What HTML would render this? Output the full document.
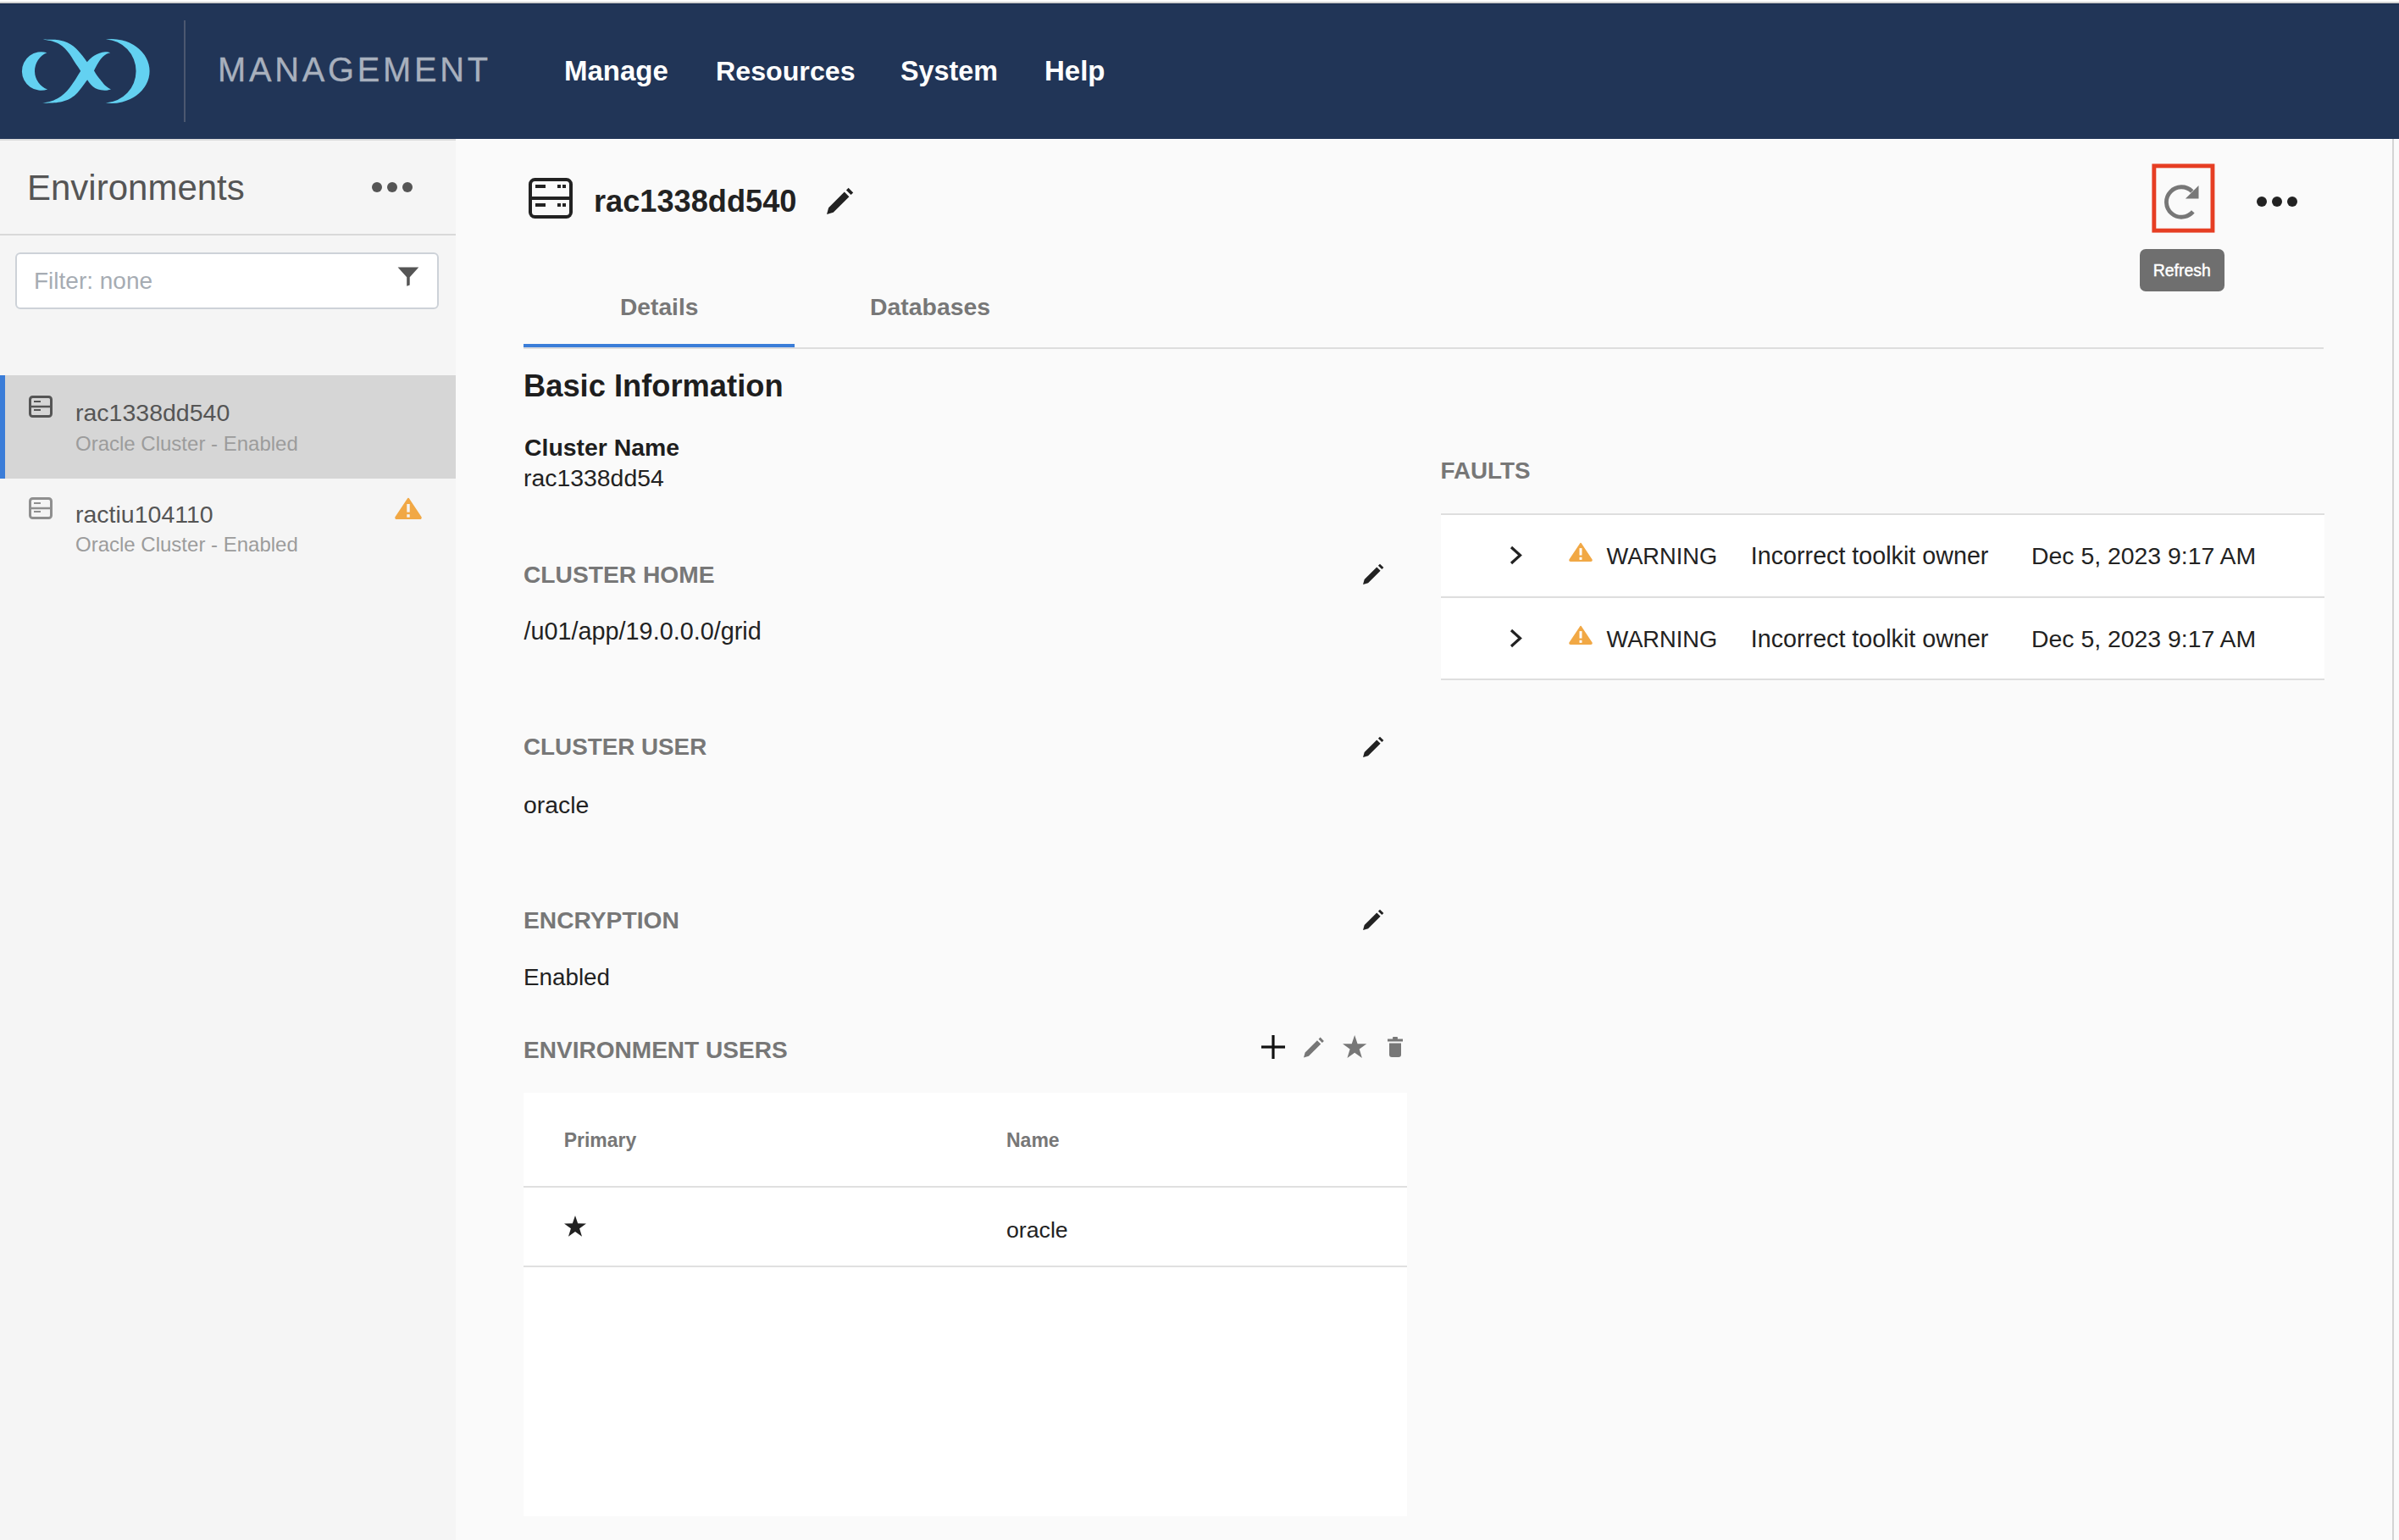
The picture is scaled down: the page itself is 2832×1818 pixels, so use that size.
<!DOCTYPE html>
<html><head><meta charset="utf-8"><style>
html,body{margin:0;padding:0;width:2832px;height:1818px;overflow:hidden;background:#fafafa;font-family:"Liberation Sans",sans-serif;}
.t{position:absolute;white-space:nowrap;line-height:1;}
.a{position:absolute;}
svg{position:absolute;overflow:visible;}
</style></head><body>
<div class="a" style="left:0;top:0;width:2832px;height:2px;background:#fff"></div><div class="a" style="left:0;top:2px;width:2832px;height:2px;background:#d2d2d2"></div><div class="a" style="left:0;top:4px;width:2832px;height:160px;background:#213557;border-top:1px solid #16284a;box-sizing:border-box"></div><svg style="left:0;top:0" width="200" height="164"><g fill="#63d1f1"><path d="M55.4 62.3 A22.74 22.74 0 1 0 56.1 105.5 A23.2 23.2 0 0 1 55.4 62.3 Z"/><path d="M124.9 46.4 A45.15 37.95 0 1 1 124.9 121.5 A37.6 37.6 0 0 0 124.9 46.4 Z"/><path d="M49.09 46.36 C50.23 46.41 52.95 46.55 55.91 46.64 C58.86 46.73 63.55 46.55 66.82 46.91 C70.09 47.27 72.82 47.91 75.55 48.82 C78.27 49.73 80.82 50.95 83.18 52.36 C85.55 53.77 87.73 55.45 89.73 57.27 C91.73 59.09 93.55 61.36 95.18 63.27 C96.82 65.18 98.27 67.05 99.55 68.73 C100.82 70.41 102.27 72.59 102.82 73.36 C103.46 72.68 105.18 70.59 106.64 69.27 C108.09 67.96 109.73 66.55 111.55 65.45 C113.36 64.36 115.46 63.41 117.55 62.73 C119.64 62.05 121.96 61.45 124.09 61.36 C126.23 61.27 129.32 62.05 130.37 62.18 C129.59 62.45 127.23 63.00 125.73 63.82 C124.23 64.64 122.82 65.64 121.37 67.09 C119.91 68.55 118.27 70.73 117.00 72.55 C115.73 74.36 114.73 76.18 113.73 78.00 C112.73 79.82 111.46 82.55 111.00 83.46 C111.64 84.46 113.55 87.64 114.82 89.46 C116.09 91.27 117.27 92.64 118.64 94.36 C120.00 96.09 121.64 98.36 123.00 99.82 C124.37 101.27 125.50 102.14 126.82 103.09 C128.14 104.05 130.23 105.14 130.91 105.55 C130.05 105.73 127.68 106.50 125.73 106.64 C123.77 106.77 121.37 106.77 119.18 106.36 C117.00 105.96 114.64 105.27 112.64 104.18 C110.64 103.09 108.77 101.46 107.18 99.82 C105.59 98.18 103.77 95.27 103.09 94.36 C102.41 95.27 100.50 97.82 99.00 99.82 C97.50 101.82 95.82 104.27 94.09 106.36 C92.36 108.46 90.64 110.64 88.64 112.36 C86.64 114.09 84.64 115.46 82.09 116.73 C79.55 118.00 76.36 119.23 73.36 120.00 C70.36 120.77 67.00 121.09 64.09 121.37 C61.18 121.64 58.23 121.59 55.91 121.64 C53.59 121.68 51.14 121.64 50.18 121.64 C51.59 121.37 55.68 120.91 58.64 120.00 C61.59 119.09 65.09 117.73 67.91 116.18 C70.73 114.64 73.18 112.82 75.55 110.73 C77.91 108.64 80.09 106.09 82.09 103.64 C84.09 101.18 86.00 98.27 87.55 96.00 C89.09 93.73 90.09 92.05 91.36 90.00 C92.64 87.96 94.55 84.77 95.18 83.73 C94.55 82.77 92.73 80.05 91.36 78.00 C90.00 75.96 88.55 73.82 87.00 71.46 C85.46 69.09 83.82 66.18 82.09 63.82 C80.36 61.45 78.73 59.27 76.64 57.27 C74.55 55.27 72.09 53.27 69.55 51.82 C67.00 50.36 64.09 49.36 61.36 48.55 C58.64 47.73 55.23 47.27 53.18 46.91 C51.14 46.55 49.77 46.45 49.09 46.36 Z"/></g></svg>
<div class="a" style="left:217px;top:24px;width:2px;height:120px;background:#4c5870"></div><div class="t" style="left:257px;top:62.90px;font-size:39.8px;font-weight:400;color:#a8b0bd;letter-spacing:3.75px;-webkit-text-stroke:0.35px #a8b0bd">MANAGEMENT</div>
<div class="t" style="left:666px;top:67.26px;font-size:33px;font-weight:700;color:#fff;">Manage</div>
<div class="t" style="left:845px;top:67.94px;font-size:32.2px;font-weight:700;color:#fff;">Resources</div>
<div class="t" style="left:1063px;top:67.85px;font-size:32.3px;font-weight:700;color:#fff;">System</div>
<div class="t" style="left:1233px;top:67.26px;font-size:33px;font-weight:700;color:#fff;">Help</div>
<div class="a" style="left:0;top:164px;width:538px;height:1654px;background:#f5f5f5"></div><div class="a" style="left:0;top:164px;width:538px;height:2px;background:#dcdcdc"></div><div class="a" style="left:538px;top:164px;width:2294px;height:1px;background:#fff"></div><div class="t" style="left:32px;top:200.94px;font-size:42px;font-weight:400;color:#555;">Environments</div>
<div class="a" style="left:439.0px;top:214.6px;width:12.4px;height:12.4px;border-radius:50%;background:#555"></div><div class="a" style="left:457.0px;top:214.6px;width:12.4px;height:12.4px;border-radius:50%;background:#555"></div><div class="a" style="left:475.0px;top:214.6px;width:12.4px;height:12.4px;border-radius:50%;background:#555"></div><div class="a" style="left:0;top:276px;width:538px;height:2px;background:#d9d9d9"></div><div class="a" style="left:18px;top:298px;width:500px;height:67px;box-sizing:border-box;border:2px solid #cdd2d8;border-radius:6px;background:#fff"></div><div class="t" style="left:40px;top:318.29px;font-size:28px;font-weight:400;color:#a6acb3;">Filter: none</div>
<svg style="left:469px;top:315px" width="26" height="23"><path d="M0.6 0.6H25.3L14.7 12.3V21.5L11.2 22.8V12.3Z" fill="#555"/></svg><div class="a" style="left:0;top:443px;width:538px;height:122px;background:#d6d6d6"></div><div class="a" style="left:0;top:443px;width:6px;height:122px;background:#3b7dd8"></div><svg style="left:34px;top:467px" width="28" height="26"><rect x="1.5" y="1.5" width="25" height="23" rx="3" fill="none" stroke="#555" stroke-width="3"/><line x1="2" y1="13" x2="26" y2="13" stroke="#555" stroke-width="2.5"/><rect x="6" y="6" width="8" height="2" fill="#555"/><rect x="6" y="16" width="8" height="2" fill="#555"/></svg><div class="t" style="left:89px;top:473.07px;font-size:28.5px;font-weight:400;color:#555;">rac1338dd540</div>
<div class="t" style="left:89px;top:511.68px;font-size:24px;font-weight:400;color:#9c9c9c;">Oracle Cluster - Enabled</div>
<svg style="left:34px;top:587px" width="28" height="26"><rect x="1.5" y="1.5" width="25" height="23" rx="3" fill="none" stroke="#8f8f8f" stroke-width="3"/><line x1="2" y1="13" x2="26" y2="13" stroke="#8f8f8f" stroke-width="2.5"/><rect x="6" y="6" width="8" height="2" fill="#8f8f8f"/><rect x="6" y="16" width="8" height="2" fill="#8f8f8f"/></svg><div class="t" style="left:89px;top:593.27px;font-size:28.5px;font-weight:400;color:#555;">ractiu104110</div>
<div class="t" style="left:89px;top:631.48px;font-size:24px;font-weight:400;color:#9c9c9c;">Oracle Cluster - Enabled</div>
<svg style="left:466px;top:587px" width="32" height="26" viewBox="0 0 32 26"><path d="M16 2.2 L30.3 23.6 Q30.8 24.8 29.6 24.8 H2.4 Q1.2 24.8 1.7 23.6 Z" fill="#f1a845" stroke="#f1a845" stroke-width="2.6" stroke-linejoin="round"/><rect x="14.3" y="8" width="3.4" height="9.6" fill="#f5f5f5"/><rect x="14.3" y="20.2" width="3.4" height="3.5" fill="#f5f5f5"/></svg><div class="a" style="left:2824px;top:164px;width:2px;height:1654px;background:#d4d4d4"></div><svg style="left:624px;top:210px" width="52" height="48"><rect x="2" y="2" width="48" height="44" rx="5.5" fill="none" stroke="#222" stroke-width="4"/><line x1="2" y1="24" x2="50" y2="24" stroke="#222" stroke-width="4"/><rect x="8" y="8" width="12" height="4" fill="#222"/><rect x="34" y="8" width="4" height="4" fill="#222"/><rect x="40" y="8" width="4" height="4" fill="#222"/><rect x="8" y="30" width="12" height="4" fill="#222"/><rect x="34" y="30" width="4" height="4" fill="#222"/><rect x="40" y="30" width="4" height="4" fill="#222"/></svg><div class="t" style="left:701px;top:220.35px;font-size:36.2px;font-weight:700;color:#222;">rac1338dd540</div>
<svg style="left:976px;top:221px" width="32" height="32" viewBox="0 0 24 24"><path d="M0 24 L1.6 18.2 L15.6 4.2 L19.8 8.4 L5.8 22.4 Z M17.2 2.6 L19.2 0.6 L23.4 4.8 L21.4 6.8 Z" fill="#222"/></svg><svg style="left:2540px;top:193px" width="76" height="83"><rect x="2.85" y="2.85" width="69.1" height="76.3" fill="none" stroke="#e63e23" stroke-width="4.9"/></svg><svg style="left:2555.4px;top:218.1px" width="42" height="41" viewBox="0 0 42 41"><path d="M33.8 31.9 A17.75 17.75 0 1 1 32.75 7.95" fill="none" stroke="#777" stroke-width="4.8"/><path d="M40.5 1.0 V16.6 H24.9 Z" fill="#777"/></svg><div class="a" style="left:2664.0px;top:231.8px;width:12.2px;height:12.2px;border-radius:50%;background:#222"></div><div class="a" style="left:2682.0px;top:231.8px;width:12.2px;height:12.2px;border-radius:50%;background:#222"></div><div class="a" style="left:2700.0px;top:231.8px;width:12.2px;height:12.2px;border-radius:50%;background:#222"></div><div class="a" style="left:2526px;top:294px;width:100px;height:50px;border-radius:7px;background:#6f6f6f"></div><div class="t" style="left:2541.8px;top:309.57px;font-size:19.4px;font-weight:400;color:#fff;-webkit-text-stroke:0.45px #fff">Refresh</div>
<div class="a" style="left:618px;top:410px;width:2125px;height:2px;background:#dddddd"></div><div class="a" style="left:618px;top:406px;width:320px;height:4px;background:#3b7dd8"></div><div class="t" style="left:732px;top:348.12px;font-size:28.2px;font-weight:700;color:#777;">Details</div>
<div class="t" style="left:1027px;top:347.95px;font-size:28.4px;font-weight:700;color:#777;">Databases</div>
<div class="t" style="left:618px;top:438.06px;font-size:36.3px;font-weight:700;color:#1e1e1e;">Basic Information</div>
<div class="t" style="left:619px;top:514.15px;font-size:28.4px;font-weight:700;color:#1e1e1e;">Cluster Name</div>
<div class="t" style="left:618px;top:549.55px;font-size:28.4px;font-weight:400;color:#222;">rac1338dd54</div>
<div class="t" style="left:618px;top:663.92px;font-size:28.2px;font-weight:700;color:#777;">CLUSTER HOME</div>
<div class="t" style="left:618.5px;top:731.42px;font-size:28.8px;font-weight:400;color:#222;">/u01/app/19.0.0.0/grid</div>
<svg style="left:1609px;top:665px" width="25" height="25" viewBox="0 0 24 24"><path d="M0 24 L1.6 18.2 L15.6 4.2 L19.8 8.4 L5.8 22.4 Z M17.2 2.6 L19.2 0.6 L23.4 4.8 L21.4 6.8 Z" fill="#222"/></svg><div class="t" style="left:618px;top:868.46px;font-size:27.8px;font-weight:700;color:#777;">CLUSTER USER</div>
<div class="t" style="left:618px;top:935.95px;font-size:28.4px;font-weight:400;color:#222;">oracle</div>
<svg style="left:1609px;top:869px" width="25" height="25" viewBox="0 0 24 24"><path d="M0 24 L1.6 18.2 L15.6 4.2 L19.8 8.4 L5.8 22.4 Z M17.2 2.6 L19.2 0.6 L23.4 4.8 L21.4 6.8 Z" fill="#222"/></svg><div class="t" style="left:618px;top:1072.02px;font-size:28.2px;font-weight:700;color:#777;">ENCRYPTION</div>
<div class="t" style="left:618px;top:1140.36px;font-size:27.8px;font-weight:400;color:#222;">Enabled</div>
<svg style="left:1609px;top:1073px" width="25" height="25" viewBox="0 0 24 24"><path d="M0 24 L1.6 18.2 L15.6 4.2 L19.8 8.4 L5.8 22.4 Z M17.2 2.6 L19.2 0.6 L23.4 4.8 L21.4 6.8 Z" fill="#222"/></svg><div class="t" style="left:618px;top:1226.15px;font-size:28.05px;font-weight:700;color:#777;">ENVIRONMENT USERS</div>
<svg style="left:1489px;top:1222px" width="28" height="28"><rect x="12.4" y="0" width="3.2" height="28" fill="#111"/><rect x="0" y="12.4" width="28" height="3.2" fill="#111"/></svg><svg style="left:1539px;top:1224px" width="24.5" height="24.5" viewBox="0 0 24 24"><path d="M0 24 L1.6 18.2 L15.6 4.2 L19.8 8.4 L5.8 22.4 Z M17.2 2.6 L19.2 0.6 L23.4 4.8 L21.4 6.8 Z" fill="#777"/></svg><svg style="left:1585px;top:1221.8px" width="28.3" height="28.3" viewBox="0 0 24 24"><path d="M12 0 L14.9 8.6 L24 8.7 L16.7 14.1 L19.4 22.8 L12 17.5 L4.6 22.8 L7.3 14.1 L0 8.7 L9.1 8.6 Z" fill="#777"/></svg><svg style="left:1638px;top:1223.5px" width="18" height="24" viewBox="0 0 18 24"><rect x="0" y="2.5" width="18" height="3" fill="#777"/><rect x="6" y="0" width="6" height="3" rx="1" fill="#777"/><path d="M2 7.5 H16 V21 Q16 24 13 24 H5 Q2 24 2 21 Z" fill="#777"/></svg><div class="a" style="left:618px;top:1290px;width:1043px;height:500px;background:#fff"></div><div class="a" style="left:618px;top:1400px;width:1043px;height:2px;background:#e0e0e0"></div><div class="a" style="left:618px;top:1494px;width:1043px;height:2px;background:#e0e0e0"></div><div class="t" style="left:665.7px;top:1334.73px;font-size:23px;font-weight:700;color:#777;">Primary</div>
<div class="t" style="left:1188px;top:1334.73px;font-size:23px;font-weight:700;color:#777;">Name</div>
<svg style="left:666px;top:1435px" width="26" height="26" viewBox="0 0 24 24"><path d="M12 0 L14.9 8.6 L24 8.7 L16.7 14.1 L19.4 22.8 L12 17.5 L4.6 22.8 L7.3 14.1 L0 8.7 L9.1 8.6 Z" fill="#222"/></svg><div class="t" style="left:1188px;top:1438.99px;font-size:26.7px;font-weight:400;color:#222;">oracle</div>
<div class="t" style="left:1700.5px;top:542.46px;font-size:27.8px;font-weight:700;color:#777;">FAULTS</div>
<div class="a" style="left:1701px;top:606.0px;width:1043px;height:97px;background:#fff;border-top:2px solid #dedede;box-sizing:border-box"></div><svg style="left:1782px;top:644.0px" width="15" height="23" viewBox="0 0 15 23"><path d="M2 2 L12.5 11.5 L2 21" fill="none" stroke="#222" stroke-width="3.2"/></svg><svg style="left:1852px;top:640.0px" width="28" height="23" viewBox="0 0 32 26"><path d="M16 2.2 L30.3 23.6 Q30.8 24.8 29.6 24.8 H2.4 Q1.2 24.8 1.7 23.6 Z" fill="#f1a845" stroke="#f1a845" stroke-width="2.6" stroke-linejoin="round"/><rect x="14.3" y="8" width="3.4" height="9.6" fill="#fff"/><rect x="14.3" y="20.2" width="3.4" height="3.5" fill="#fff"/></svg><div class="t" style="left:1896.4px;top:643.19px;font-size:27.3px;font-weight:400;color:#222;">WARNING</div>
<div class="t" style="left:2066.8px;top:642.00px;font-size:28.7px;font-weight:400;color:#222;">Incorrect toolkit owner</div>
<div class="t" style="left:2398px;top:642.25px;font-size:28.4px;font-weight:400;color:#222;">Dec 5, 2023 9:17 AM</div>
<div class="a" style="left:1701px;top:703.5px;width:1043px;height:97px;background:#fff;border-top:2px solid #dedede;box-sizing:border-box"></div><svg style="left:1782px;top:741.8px" width="15" height="23" viewBox="0 0 15 23"><path d="M2 2 L12.5 11.5 L2 21" fill="none" stroke="#222" stroke-width="3.2"/></svg><svg style="left:1852px;top:737.8px" width="28" height="23" viewBox="0 0 32 26"><path d="M16 2.2 L30.3 23.6 Q30.8 24.8 29.6 24.8 H2.4 Q1.2 24.8 1.7 23.6 Z" fill="#f1a845" stroke="#f1a845" stroke-width="2.6" stroke-linejoin="round"/><rect x="14.3" y="8" width="3.4" height="9.6" fill="#fff"/><rect x="14.3" y="20.2" width="3.4" height="3.5" fill="#fff"/></svg><div class="t" style="left:1896.4px;top:740.99px;font-size:27.3px;font-weight:400;color:#222;">WARNING</div>
<div class="t" style="left:2066.8px;top:739.80px;font-size:28.7px;font-weight:400;color:#222;">Incorrect toolkit owner</div>
<div class="t" style="left:2398px;top:740.05px;font-size:28.4px;font-weight:400;color:#222;">Dec 5, 2023 9:17 AM</div>
<div class="a" style="left:1701px;top:801px;width:1043px;height:2px;background:#dedede"></div></body></html>
